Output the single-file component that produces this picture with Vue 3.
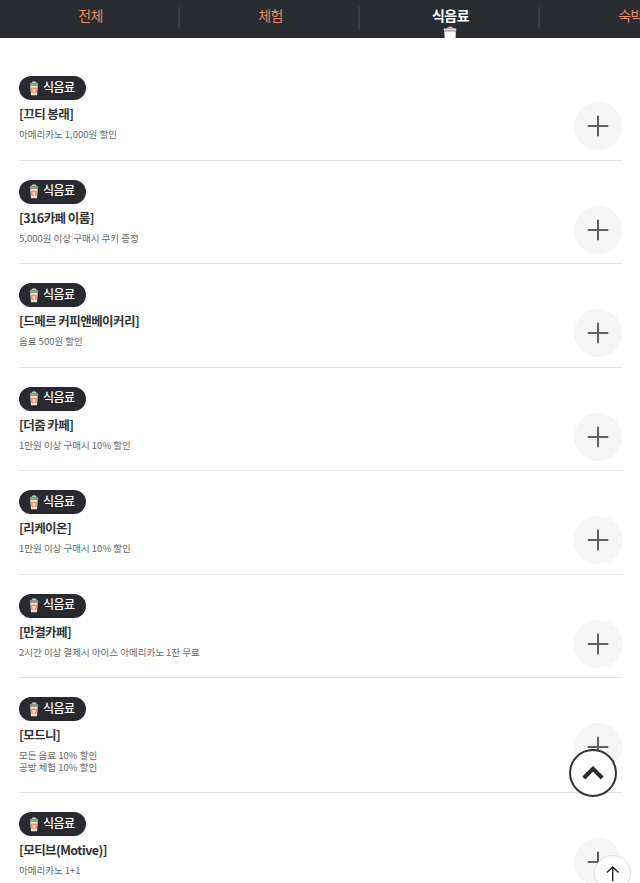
<script setup>
const tabs = ['전체', '체험', '식음료', '숙박']
const shops = [
  { name: '[끄티 봉래]', lines: ['아메리카노 1,000원 할인'] },
  { name: '[316카페 이룸]', lines: ['5,000원 이상 구매시 쿠키 증정'] },
  { name: '[드메르 커피앤베이커리]', lines: ['음료 500원 할인'] },
  { name: '[더줌 카페]', lines: ['1만원 이상 구매시 10% 할인'] },
  { name: '[리케이온]', lines: ['1만원 이상 구매시 10% 할인'] },
  { name: '[만결카페]', lines: ['2시간 이상 결제시 아이스 아메리카노 1잔 무료'] },
  { name: '[모드니]', lines: ['모든 음료 10% 할인', '공방 체험 10% 할인'] },
  { name: '[모티브(Motive)]', lines: ['아메리카노 1+1'] },
]
</script>

<template>
  <div class="page">
    <nav class="tabs">
      <a v-for="(tab, i) in tabs" :key="tab" class="tab" :class="{ active: i === 2 }">
        <span>{{ tab }}</span>
        <svg v-if="i === 2" class="tab-cup" width="14" height="12" viewBox="0 0 14 12">
          <path d="M3 2.4 Q5 1.8 6.5 .6 Q9 0 11 2.4Z" fill="#b9babc" />
          <path d="M.8 2.4H13.2V4.8H.8Z" fill="#d8d9da" />
          <path d="M1.3 5.2H12.7V12H1.6Z" fill="#fff" />
        </svg>
      </a>
    </nav>
    <ul class="list">
      <li v-for="shop in shops" :key="shop.name" class="item">
        <div class="info">
          <span class="badge">
            <svg width="10" height="15" viewBox="0 0 10 15">
              <path d="M2 2.4 Q3 .2 5 .3 Q7.5 .2 8 2.4Z" fill="#bccbb9" />
              <path d="M.8 2.2H9.2V4.4H.8Z" fill="#79a88e" />
              <path d="M1.2 4.4H8.8L8 14.2H2Z" fill="#f4ded0" />
              <path d="M1.8 6.8H8.2L7.8 11.8H2.2Z" fill="#ea9479" />
              <circle cx="5" cy="9.3" r="1.6" fill="#f8d9c5" />
            </svg>
            <span class="badge-label">식음료</span>
          </span>
          <h2 class="name">{{ shop.name }}</h2>
          <p v-for="line in shop.lines" :key="line" class="line">{{ line }}</p>
        </div>
        <button class="more" aria-label="더보기">
          <svg width="22" height="22" viewBox="0 0 22 22" stroke="#626262" stroke-width="2">
            <path d="M.8 11H21.2M11 .8V21.2" />
          </svg>
        </button>
      </li>
    </ul>
    <button class="fold" aria-label="접기">
      <svg width="24" height="16" viewBox="0 0 24 16" fill="none" stroke="#2b2b2b" stroke-width="4">
        <path d="M2.8 13L12 3.8L21.2 13" />
      </svg>
    </button>
    <button class="top" aria-label="맨 위로">
      <svg width="14" height="16" viewBox="0 0 14 16" fill="none" stroke="#222" stroke-width="1.4">
        <path d="M6.7 15V1M.9 6.4L6.7 1L12.5 6.4" />
      </svg>
    </button>
  </div>
</template>

<style>
body {
  margin: 0;
  overflow: hidden;
}
</style>

<style scoped>
.page {
  position: relative;
  width: 640px;
  height: 883px;
  overflow: hidden;
  background: #fff;
  font-family: "Noto Sans CJK KR", "Noto Sans", sans-serif;
  color: #333;
}
.tabs {
  display: flex;
  height: 38px;
  overflow: hidden;
  background: #292c31;
}
.tab {
  display: flex;
  flex: 0 0 180px;
  flex-direction: column;
  align-items: center;
  font-size: 14px;
  line-height: 20px;
  letter-spacing: -0.6px;
  color: #e58b66;
  padding: 5px 0 0 1px;
  box-sizing: border-box;
  background: linear-gradient(#3b3e43, #3b3e43) right 0 top 7px / 2px 22px no-repeat;
}
.tab.active {
  font-weight: 700;
  color: #fff;
}
.tab-cup {
  margin: 1px 1px 0 0;
  flex: none;
}
.list {
  margin: 0;
  padding: 19.2px 18px 0 19px;
  list-style: none;
}
.item {
  display: flex;
  justify-content: space-between;
  align-items: flex-start;
  box-sizing: border-box;
  padding: 19px 0 19px;
  border-bottom: 1px solid #e4e4e4;
}
.badge {
  display: flex;
  align-items: center;
  box-sizing: border-box;
  width: 67px;
  height: 24px;
  padding-left: 10px;
  gap: 4px;
  border-radius: 12px;
  background: #282a30;
  color: #fff;
}
.badge-label {
  font-size: 12px;
  font-weight: 500;
  line-height: 20px;
  letter-spacing: -0.6px;
  margin-top: -2.5px;
}
.name {
  margin: 4px 0 5px;
  font-size: 12.5px;
  font-weight: 700;
  line-height: 20px;
  letter-spacing: -0.55px;
}
.line {
  margin: 0;
  font-size: 9.5px;
  line-height: 11.5px;
  color: #666;
}
button {
  display: flex;
  align-items: center;
  justify-content: center;
  padding: 0;
  box-sizing: border-box;
  border: 0;
  border-radius: 50%;
}
.more {
  width: 48px;
  height: 48px;
  margin: 26.2px 0 -20px;
  background: #f5f5f5;
}
.fold {
  position: absolute;
  left: 569px;
  top: 749px;
  width: 48px;
  height: 48px;
  border: 2px solid #333;
  background: #fff;
}
.top {
  position: absolute;
  left: 594px;
  top: 855px;
  width: 37px;
  height: 37px;
  border: 1px solid #ddd;
  background: #fff;
}
</style>
